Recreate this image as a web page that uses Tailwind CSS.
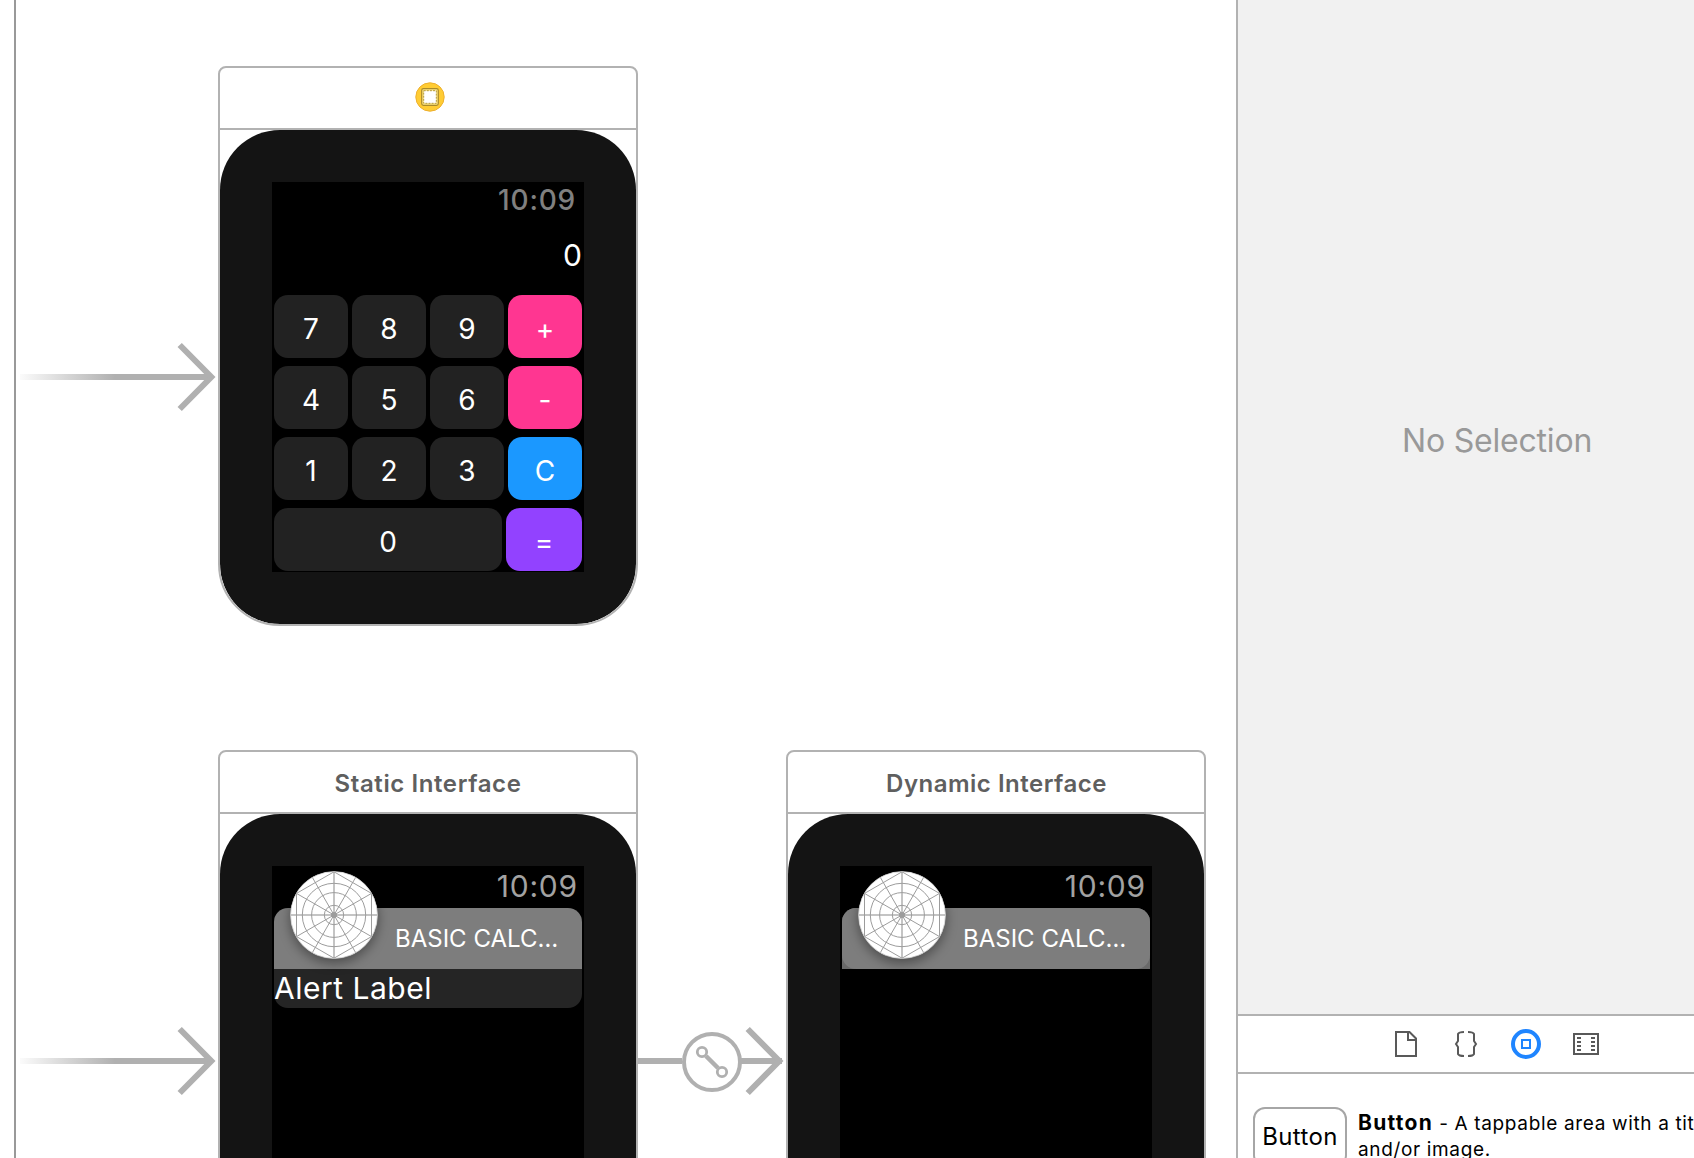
<!DOCTYPE html>
<html lang="en">
<head>
<meta charset="utf-8">
<title>Interface.storyboard</title>
<script src="https://cdn.jsdelivr.net/npm/@tailwindcss/browser@4"></script>
</head>
<body class="flex h-[1158px] w-[1694px] overflow-hidden bg-white font-[Inter,sans-serif] text-black">

<!-- symbols shared by the scenes -->
<svg class="absolute size-0" aria-hidden="true">
  <defs>
    <linearGradient id="fade" gradientUnits="userSpaceOnUse" x1="20" y1="0" x2="115" y2="0">
      <stop offset="0" stop-color="#b0b0b0" stop-opacity="0.05"/>
      <stop offset="1" stop-color="#b0b0b0"/>
    </linearGradient>
    <symbol id="entry" viewBox="0 0 220 80">
      <rect x="20" y="37" width="190" height="6" fill="url(#fade)"/>
      <path d="M179.7 8 211.3 40 179.7 72" fill="none" stroke="#b0b0b0" stroke-width="6"/>
    </symbol>
    <symbol id="app-icon" viewBox="0 0 88 88">
      <circle cx="44" cy="44" r="43.7" fill="#fff"/>
      <g fill="none" stroke="#9c9c9c" stroke-width="1">
        <path d="M44 0.5V87.5M0.5 44H87.5" stroke="#c4c4c4" stroke-width="2"/>
        <path d="M6.3 22.3 81.7 65.7M6.3 65.7 81.7 22.3M22.3 6.3 65.7 81.7M22.3 81.7 65.7 6.3"/>
        <path d="M44 0.8 81.5 22.4V65.6L44 87.2 6.5 65.6V22.4Z"/>
        <circle cx="44" cy="44" r="9.7"/>
        <circle cx="44" cy="44" r="22.4"/>
        <circle cx="44" cy="44" r="31.7"/>
        <circle cx="44" cy="44" r="43.5" stroke="#b8b8b8" stroke-width="0.7"/>
      </g>
      <circle cx="44" cy="44" r="3" fill="#9c9c9c"/>
    </symbol>
  </defs>
</svg>

<!-- storyboard canvas -->
<main class="relative w-[1236px] shrink-0 overflow-hidden bg-white">
  <div class="absolute inset-y-0 left-[14px] w-0.5 bg-[#999]"></div>

  <svg class="absolute left-0 top-[337px] h-20 w-[220px]"><use href="#entry"/></svg>
  <svg class="absolute left-0 top-[1021px] h-20 w-[220px]"><use href="#entry"/></svg>

  <!-- relationship between static and dynamic scenes -->
  <svg class="absolute left-[636px] top-[1021px] h-20 w-[152px]" viewBox="0 0 152 80" fill="none" stroke="#b0b0b0">
    <path d="M0 40H46M104 40H146" stroke-width="6"/>
    <path d="M111.7 8 143.3 40 111.7 72" stroke-width="6"/>
    <circle cx="76" cy="41" r="28" fill="#fff" stroke-width="4"/>
    <path d="M70 35 82 47" stroke-width="4.5"/>
    <circle cx="66" cy="31" r="4.7" fill="#fff" stroke-width="2.8"/>
    <circle cx="86" cy="51" r="4.7" fill="#fff" stroke-width="2.8"/>
  </svg>

  <!-- calculator scene -->
  <section class="absolute left-[218px] top-[66px] h-[560px] w-[420px] overflow-hidden rounded-t-lg rounded-b-[62px] border-2 border-[#b2b2b2] bg-white">
    <header class="flex h-[62px] justify-center border-b-2 border-[#b2b2b2] pl-1 pt-[14px]">
      <svg class="size-[30px]" viewBox="0 0 30 30" fill="none">
        <circle cx="15" cy="15" r="14.2" fill="#ffcc33" stroke="#edb02f"/>
        <rect x="6.7" y="6.7" width="16.6" height="16.6" rx="1.8" fill="#ffe680" stroke="#a98a2c" stroke-width="1.2"/>
        <rect x="8.7" y="8.7" width="12.6" height="12.6" fill="#fff" stroke="#b5993c" stroke-width="1" stroke-dasharray="2 1.1"/>
      </svg>
    </header>
    <div class="h-[494px] rounded-[60px] bg-[#141414] px-[52px] pt-[52px]">
      <div class="h-[390px] bg-black px-0.5 text-[28px] text-white">
        <div class="h-9 pr-1.5 text-right font-medium leading-[37px] tracking-[0.8px] text-[#808080]">10:09</div>
        <div class="h-[77px] text-right text-[30px] leading-[75px]">0</div>
        <div class="grid grid-cols-4 gap-x-1 gap-y-2 text-center leading-[68px] *:h-[63px] *:rounded-[14px]">
          <div class="bg-[#222]">7</div><div class="bg-[#222]">8</div><div class="bg-[#222]">9</div><div class="bg-[#ff3691]">+</div>
          <div class="bg-[#222]">4</div><div class="bg-[#222]">5</div><div class="bg-[#222]">6</div><div class="bg-[#ff3691]">-</div>
          <div class="bg-[#222]">1</div><div class="bg-[#222]">2</div><div class="bg-[#222]">3</div><div class="bg-[#1b98ff]">C</div>
        </div>
        <div class="mt-2 flex gap-1 text-center leading-[68px] *:h-[63px] *:rounded-[14px]">
          <div class="w-[228px] bg-[#222]">0</div><div class="w-[76px] bg-[#9242ff]">=</div>
        </div>
      </div>
    </div>
  </section>

  <!-- static notification scene -->
  <section class="absolute left-[218px] top-[750px] h-[560px] w-[420px] overflow-hidden rounded-t-lg border-2 border-[#b2b2b2] bg-white">
    <header class="h-[62px] border-b-2 border-[#b2b2b2] pt-0.5 text-center text-2xl/[60px] font-semibold tracking-[0.6px] text-[#5f5f5f]">Static Interface</header>
    <div class="h-[494px] rounded-[60px] bg-[#141414] px-[52px] pt-[52px]">
      <div class="relative h-[390px] bg-black px-0.5 text-[30px] text-white">
        <div class="h-[42px] pr-1 text-right leading-10 tracking-[0.8px] text-[#a2a2a2]">10:09</div>
        <div class="h-[61px] rounded-t-[14px] bg-[#7d7d7d] pl-[121px] text-2xl/[61px]">BASIC CALC…</div>
        <div class="h-[39px] rounded-b-[14px] bg-[#252525] leading-[39px] tracking-[0.5px]">Alert Label</div>
        <svg class="absolute left-[18px] top-[5px] size-[88px] rounded-full shadow-[0_4px_12px_rgba(0,0,0,0.4)]"><use href="#app-icon"/></svg>
      </div>
    </div>
  </section>

  <!-- dynamic notification scene -->
  <section class="absolute left-[786px] top-[750px] h-[560px] w-[420px] overflow-hidden rounded-t-lg border-2 border-[#b2b2b2] bg-white">
    <header class="h-[62px] border-b-2 border-[#b2b2b2] pl-px pt-0.5 text-center text-2xl/[60px] font-semibold tracking-[0.5px] text-[#5f5f5f]">Dynamic Interface</header>
    <div class="h-[494px] rounded-[60px] bg-[#141414] px-[52px] pt-[52px]">
      <div class="relative h-[390px] bg-black px-0.5 text-[30px] text-white">
        <div class="h-[42px] pr-1 text-right leading-10 tracking-[0.8px] text-[#a2a2a2]">10:09</div>
        <div class="rounded-t-[14px] bg-[#6a6a6a]">
          <div class="h-[61px] rounded-[14px] bg-[#7d7d7d] pl-[121px] text-2xl/[61px]">BASIC CALC…</div>
        </div>
        <svg class="absolute left-[18px] top-[5px] size-[88px] rounded-full shadow-[0_4px_12px_rgba(0,0,0,0.4)]"><use href="#app-icon"/></svg>
      </div>
    </div>
  </section>
</main>

<!-- utilities panel -->
<aside class="flex w-[458px] shrink-0 flex-col overflow-hidden border-l-2 border-[#b2b2b2] bg-white">
  <div class="h-[1014px] shrink-0 bg-[#f1f1f1] pl-[164px] pt-[421px] text-[32px]/[40px] tracking-[-0.2px] text-[#999]">No Selection</div>
  <nav class="flex h-[60px] shrink-0 items-center gap-[30px] border-y-2 border-[#b2b2b2] pl-[153px]">
    <svg class="size-[30px]" viewBox="0 0 30 30" fill="none" stroke="#595959" stroke-width="2">
      <path d="M5 3H18.5L25 9.5V27H5Z"/><path d="M17 4V11H24"/>
    </svg>
    <svg class="size-[30px]" viewBox="0 0 30 30" fill="none" stroke="#595959" stroke-width="2">
      <path d="M13 3Q8 3 7 5V12L5 15 7 18V25Q8 27 13 27M17 3Q22 3 23 5V12L25 15 23 18V25Q22 27 17 27"/>
    </svg>
    <svg class="size-[30px]" viewBox="0 0 30 30" fill="none" stroke="#1f85ff">
      <circle cx="15" cy="15" r="13" stroke-width="4"/><rect x="11" y="11" width="8" height="8" stroke-width="2"/>
    </svg>
    <svg class="size-[30px]" viewBox="0 0 30 30" fill="none" stroke="#595959" stroke-width="2">
      <path d="M3 5H27V25H3Z"/><path d="M6 9H10M6 13H10M6 17H10M6 21H10M20 9H24M20 13H24M20 17H24M20 21H24"/>
    </svg>
  </nav>
  <div class="flex shrink-0 gap-[11px] pl-[15px] pt-[33px]">
    <div class="h-[60px] w-[94px] shrink-0 rounded-xl border-2 border-[#a6a6a6] text-center text-2xl/[56px] tracking-[0.4px]">Button</div>
    <p class="mt-[3px] w-[360px] shrink-0 text-[19px]/[26px] tracking-[0.65px]"><b class="text-[21px]/[26px] tracking-[1.3px]">Button</b> - A tappable area with a title and/or image.</p>
  </div>
</aside>
</body>
</html>
